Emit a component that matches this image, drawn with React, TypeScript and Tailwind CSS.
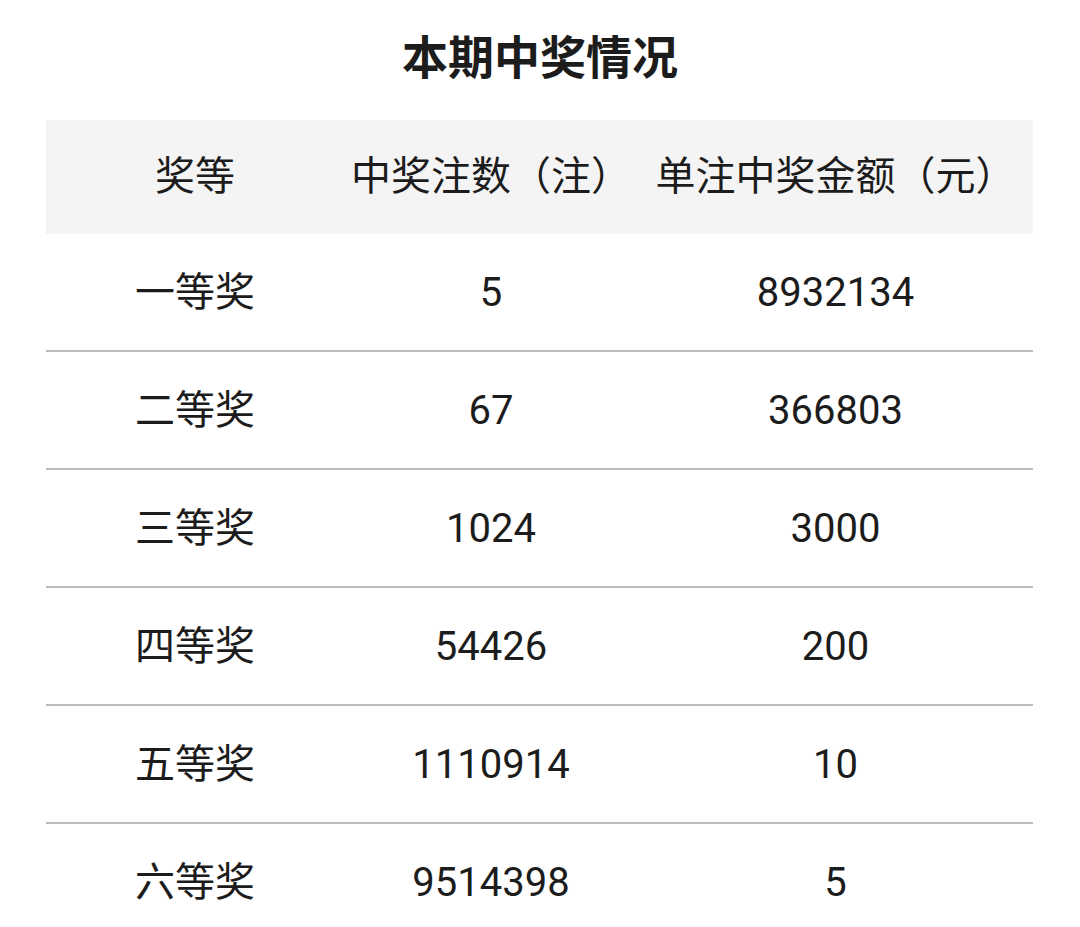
const rows = [
  ["一等奖", "5", "8932134"],
  ["二等奖", "67", "366803"],
  ["三等奖", "1024", "3000"],
  ["四等奖", "54426", "200"],
  ["五等奖", "1110914", "10"],
  ["六等奖", "9514398", "5"],
];

export default function App() {
  return (
    <div
      className="min-h-screen bg-white text-[#1c1c1c]"
      style={{ fontFamily: 'Roboto, "Noto Sans CJK SC", sans-serif' }}
    >
      <h1 className="flex h-[120px] items-center justify-center pb-1 text-[46px] font-bold leading-none">
        本期中奖情况
      </h1>
      <div className="mx-[46px] w-[987px]">
        <div className="grid h-[114px] grid-cols-[298px_294px_395px] items-center bg-[#f4f4f4] text-[40px]">
          <div className="text-center">奖等</div>
          <div className="text-center">中奖注数（注）</div>
          <div className="text-center">单注中奖金额（元）</div>
        </div>
        {rows.map((r) => (
          <div
            key={r[0]}
            className="grid h-[118px] grid-cols-[298px_294px_395px] items-center border-b-2 border-[#bdbdbd] pt-[2px] text-[40px]"
          >
            <div className="text-center">{r[0]}</div>
            <div className="text-center">{r[1]}</div>
            <div className="text-center">{r[2]}</div>
          </div>
        ))}
      </div>
    </div>
  );
}
